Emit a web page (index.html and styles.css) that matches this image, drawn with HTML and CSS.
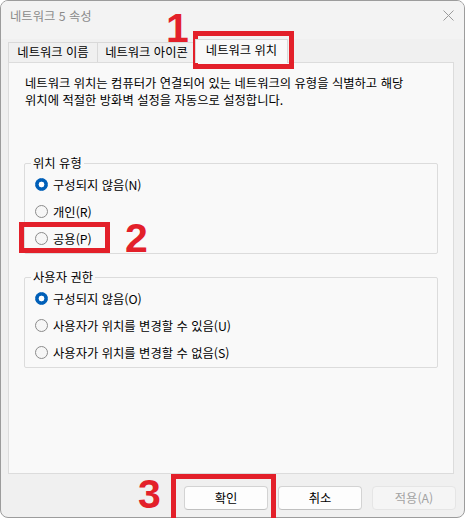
FILE: index.html
```html
<!DOCTYPE html>
<html lang="ko">
<head>
<meta charset="utf-8">
<title>네트워크 5 속성</title>
<link rel="stylesheet" href="styles.css">
</head>
<body>
<div class="window">
  <div class="titlebar">
    <span class="title">네트워크 5 속성</span>
    <svg class="close" width="11" height="11" viewBox="0 0 11 11"><path d="M0.5 0.5 L10.5 10.5 M10.5 0.5 L0.5 10.5" stroke="#9a9a9a" stroke-width="1" fill="none"/></svg>
  </div>
  <div class="tabs">
    <div class="tab t1">네트워크 이름</div>
    <div class="tab t2">네트워크 아이콘</div>
    <div class="tab t3 active">네트워크 위치</div>
  </div>
  <div class="panel">
    <p class="desc">네트워크 위치는 컴퓨터가 연결되어 있는 네트워크의 유형을 식별하고 해당<br>위치에 적절한 방화벽 설정을 자동으로 설정합니다.</p>
    <fieldset class="group">
      <legend>위치 유형</legend>
      <div class="opt"><span class="radio on"></span>구성되지 않음(N)</div>
      <div class="opt"><span class="radio"></span>개인(R)</div>
      <div class="opt"><span class="radio"></span>공용(P)</div>
    </fieldset>
    <fieldset class="group second">
      <legend>사용자 권한</legend>
      <div class="opt"><span class="radio on"></span>구성되지 않음(O)</div>
      <div class="opt"><span class="radio"></span>사용자가 위치를 변경할 수 있음(U)</div>
      <div class="opt"><span class="radio"></span>사용자가 위치를 변경할 수 없음(S)</div>
    </fieldset>
  </div>
  <div class="buttons">
    <button class="btn">확인</button>
    <button class="btn">취소</button>
    <button class="btn disabled">적용(A)</button>
  </div>
</div>
<div class="mark box1"></div>
<div class="mark box2"></div>
<div class="mark box3"></div>
<div class="num n1">1</div>
<div class="num n2">2</div>
<div class="num n3">3</div>
</body>
</html>
```
FILE: styles.css
```css
* { box-sizing: border-box; }
html, body {
  margin: 0;
  padding: 0;
  width: 465px;
  height: 518px;
  overflow: hidden;
  background: #ffffff;
}
body {
  position: relative;
  font-family: "Noto Sans CJK KR", "Noto Sans", sans-serif;
  font-size: 12.3px;
  color: #000;
}
.window {
  width: 465px;
  height: 518px;
  border: 1px solid #9c9c9c;
  border-radius: 8px;
  background: #f0f0f0;
  display: flex;
  flex-direction: column;
  overflow: hidden;
}
.titlebar {
  height: 38px;
  flex: none;
  display: flex;
  align-items: flex-start;
  padding: 7px 10px 0 9px;
  background: #f3f3f3;
}
.title {
  line-height: 16px;
  color: #8a8a8a;
}
.close {
  margin-left: auto;
  margin-top: 2px;
}
.tabs {
  height: 23px;
  flex: none;
  display: flex;
  align-items: flex-end;
  padding-left: 7px;
}
.tab {
  height: 20px;
  line-height: 19px;
  border: 1px solid #d9d9d9;
  border-bottom: none;
  background: #f0f0f0;
  text-align: center;
  margin-right: -1px;
}
.t1 { width: 90px; }
.t2 { width: 99px; }
.t3 { width: 93px; }
.tab.active {
  height: 24px;
  line-height: 21px;
  background: #f9f9f9;
  margin-bottom: -1px;
  position: relative;
  z-index: 1;
}
.panel {
  flex: 1;
  margin: 0 10px 0 7px;
  border: 1px solid #dcdcdc;
  background: #f9f9f9;
  padding: 12px 15px 0 15px;
}
.desc {
  margin: 0 0 46px 1px;
  line-height: 17px;
}
.group {
  margin: 0;
  padding: 0 10px 1px 10px;
  border: 1px solid #dcdcdc;
  border-radius: 2px;
}
.group legend {
  padding: 0 2px;
  margin-left: -4px;
  line-height: 16px;
}
.group.second {
  margin-top: 15px;
}
.opt {
  height: 27px;
  display: flex;
  align-items: center;
  gap: 5px;
}
.radio {
  width: 13px;
  height: 13px;
  border-radius: 50%;
  border: 1px solid #8b8b8b;
  background: #f6f6f6;
  flex: none;
}
.radio.on {
  border-color: #005fb8;
  background: radial-gradient(circle, #ffffff 0 2.6px, #005fb8 3.2px);
}
.buttons {
  flex: none;
  height: 43px;
  display: flex;
  justify-content: flex-end;
  align-items: flex-start;
  gap: 10px;
  padding: 12px 8px 0 0;
}
.btn {
  width: 84px;
  height: 24px;
  font-family: inherit;
  font-size: 12.3px;
  color: #000;
  background: #fdfdfd;
  border: 1px solid #d3d3d3;
  border-bottom-color: #c0c0c0;
  border-radius: 4px;
  padding: 0;
}
.btn.disabled {
  background: #f5f5f5;
  border-color: #e5e5e5;
  color: #a3a3a3;
}
.mark {
  position: absolute;
  border: 5px solid #e3202a;
}
.box1 { left: 193px; top: 31px; width: 101px; height: 38px; }
.box2 { left: 19px; top: 222px; width: 91px; height: 31px; }
.box3 { left: 171px; top: 474px; width: 105px; height: 50px; }
.num {
  position: absolute;
  font-family: "Liberation Sans", Arial, sans-serif;
  font-weight: bold;
  font-size: 41px;
  line-height: 40px;
  color: #e3202a;
}
.n1 { left: 166px; top: 8px; }
.n2 { left: 125px; top: 218px; }
.n3 { left: 138px; top: 474px; }
```
